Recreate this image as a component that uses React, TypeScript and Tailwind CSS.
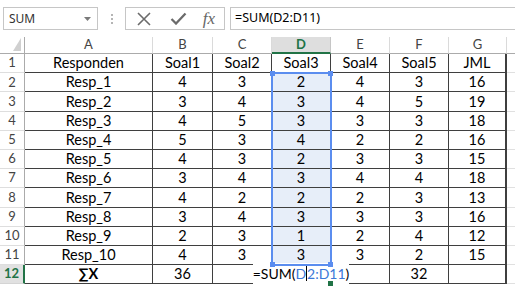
import React from "react";

const rows: (string | number)[][] = [
  ["Responden", "Soal1", "Soal2", "Soal3", "Soal4", "Soal5", "JML"],
  ["Resp_1", 4, 3, 2, 4, 3, 16],
  ["Resp_2", 3, 4, 3, 4, 5, 19],
  ["Resp_3", 4, 5, 3, 3, 3, 18],
  ["Resp_4", 5, 3, 4, 2, 2, 16],
  ["Resp_5", 4, 3, 2, 3, 3, 15],
  ["Resp_6", 3, 4, 3, 4, 4, 18],
  ["Resp_7", 4, 2, 2, 2, 3, 13],
  ["Resp_8", 3, 4, 3, 3, 3, 16],
  ["Resp_9", 2, 3, 1, 2, 4, 12],
  ["Resp_10", 4, 3, 3, 3, 2, 15],
  ["∑X", 36, "", "", "", 32, ""],
];

const letters = ["A", "B", "C", "D", "E", "F", "G"];

const FormulaBar: React.FC = () => {
  return (
    <div className="flex h-[37px] items-start pt-[7px] pl-[3px] font-['Noto_Sans',sans-serif]">
      <div className="flex h-[23px] w-[95px] items-center justify-between border border-[#c6c6c6] pl-[5px] pr-[6px] text-[12px] text-[#333]">
        <span>SUM</span>
        <svg width="7" height="4" viewBox="0 0 7 4">
          <path d="M0 0h7L3.5 4z" fill="#7a7a7a" />
        </svg>
      </div>

      <div className="flex h-[23px] w-[27px] flex-col items-center justify-center gap-[2px]">
        <span className="h-[2px] w-[2px] bg-[#b5b5b5]" />
        <span className="h-[2px] w-[2px] bg-[#b5b5b5]" />
        <span className="h-[2px] w-[2px] bg-[#b5b5b5]" />
      </div>

      <div className="flex h-[23px] w-[100px] items-center border border-[#c6c6c6]">
        <div className="flex w-[36px] justify-center">
          <svg width="14" height="14" viewBox="0 0 14 14">
            <path d="M1 1l12 12M13 1L1 13" stroke="#6b6b6b" strokeWidth="1.6" />
          </svg>
        </div>
        <div className="flex w-[32px] justify-center">
          <svg width="17" height="13" viewBox="0 0 17 13">
            <path d="M1.5 7l4.5 4.5L15.5 1.5" stroke="#6b6b6b" strokeWidth="2.3" fill="none" />
          </svg>
        </div>
        <div className="flex w-[30px] justify-center font-['Liberation_Serif',serif] text-[17px] italic leading-none text-[#666]">
          fx
        </div>
      </div>

      <div className="ml-[5px] flex h-[23px] flex-1 items-center border border-r-0 border-[#c6c6c6] pl-[4px] text-[12.5px] text-black">
        =SUM(D2:D11)
      </div>
    </div>
  );
};

const Corner: React.FC = () => (
  <div className="relative border-r border-b border-[#ababab]">
    <svg className="absolute right-[3px] bottom-[2px]" width="8" height="13" viewBox="0 0 8 13">
      <path d="M8 0v13H0z" fill="#d0d0d0" />
    </svg>
  </div>
);

const ColHeader: React.FC<{ label: string; active?: boolean }> = ({ label, active }) =>
  active ? (
    <div className="flex items-center justify-center border-r border-b-2 border-r-[#c6c6c6] border-b-[#217346] bg-[#dedede] pt-[1px] text-[13px] font-bold text-[#217346]">
      {label}
    </div>
  ) : (
    <div className="flex items-center justify-center border-r border-b border-r-[#dadada] border-b-[#ababab] text-[13px] text-[#444]">
      {label}
    </div>
  );

const RowHeader: React.FC<{ n: number; active?: boolean }> = ({ n, active }) =>
  active ? (
    <div className="flex items-center justify-center border-r-2 border-b border-r-[#217346] border-b-[#d4d4d4] bg-[#e1e1e1] text-[13px] font-bold text-[#217346]">
      {n}
    </div>
  ) : (
    <div className="flex items-center justify-center border-r border-b border-r-[#ababab] border-b-[#dedede] text-[13px] text-[#444]">
      {n}
    </div>
  );

const Editor: React.FC = () => (
  <div className="relative flex items-center justify-center border-r border-b-2 border-r-[#3f3f3f] border-b-[#217346]">
    <span className="flex items-center bg-white text-[14px] whitespace-nowrap">
      =SUM(<span className="text-[#3c78d8]">D</span>
      <span className="h-[15px] w-[1px] bg-black" />
      <span className="text-[#3c78d8]">2:D11</span>)
    </span>
    <span className="absolute -right-[3px] -bottom-[4px] h-[5px] w-[5px] bg-[#217346]" />
  </div>
);

export default function App() {
  return (
    <div className="h-[286px] w-[515px] overflow-hidden bg-white font-['Lato',sans-serif]">
      <FormulaBar />

      <div className="relative grid grid-cols-[25px_128px_60px_59px_59px_59px_59px_58px_1fr] grid-rows-[17px_repeat(12,19.2px)]">
        <Corner />
        {letters.map((l) => (
          <ColHeader key={l} label={l} active={l === "D"} />
        ))}
        <div className="border-b border-[#ababab]" />

        {rows.map((row, r) => (
          <React.Fragment key={r}>
            <RowHeader n={r + 1} active={r === 11} />
            {row.map((v, c) => {
              if (r === 11 && c === 3) {
                return <Editor key={c} />;
              }
              const sel = c === 3 && r >= 1 && r <= 10;
              const last = c === 6;
              return (
                <div
                  key={c}
                  className={
                    "flex items-center justify-center border-b border-[#3f3f3f] text-[14.5px] text-black " +
                    (last ? "border-r-2 " : "border-r ") +
                    (sel ? "bg-[#e7eef9] " : "") +
                    (r === 11 && c === 0 ? "font-bold" : "")
                  }
                >
                  {v}
                </div>
              );
            })}
            <div className="border-b border-[#e0e0e0]" />
          </React.Fragment>
        ))}

        {/* formula range highlight D2:D11 */}
        <div className="pointer-events-none absolute top-[35.2px] left-[270.5px] h-[194px] w-[61.5px] border-2 border-[#5b8def]">
          <span className="absolute -top-[3px] -left-[3px] h-[5px] w-[5px] bg-[#5b8def]" />
          <span className="absolute -top-[3px] -right-[3px] h-[5px] w-[5px] bg-[#5b8def]" />
          <span className="absolute -bottom-[3px] -left-[3px] h-[5px] w-[5px] bg-[#5b8def]" />
          <span className="absolute -right-[3px] -bottom-[3px] h-[5px] w-[5px] bg-[#5b8def]" />
        </div>
      </div>
    </div>
  );
}
